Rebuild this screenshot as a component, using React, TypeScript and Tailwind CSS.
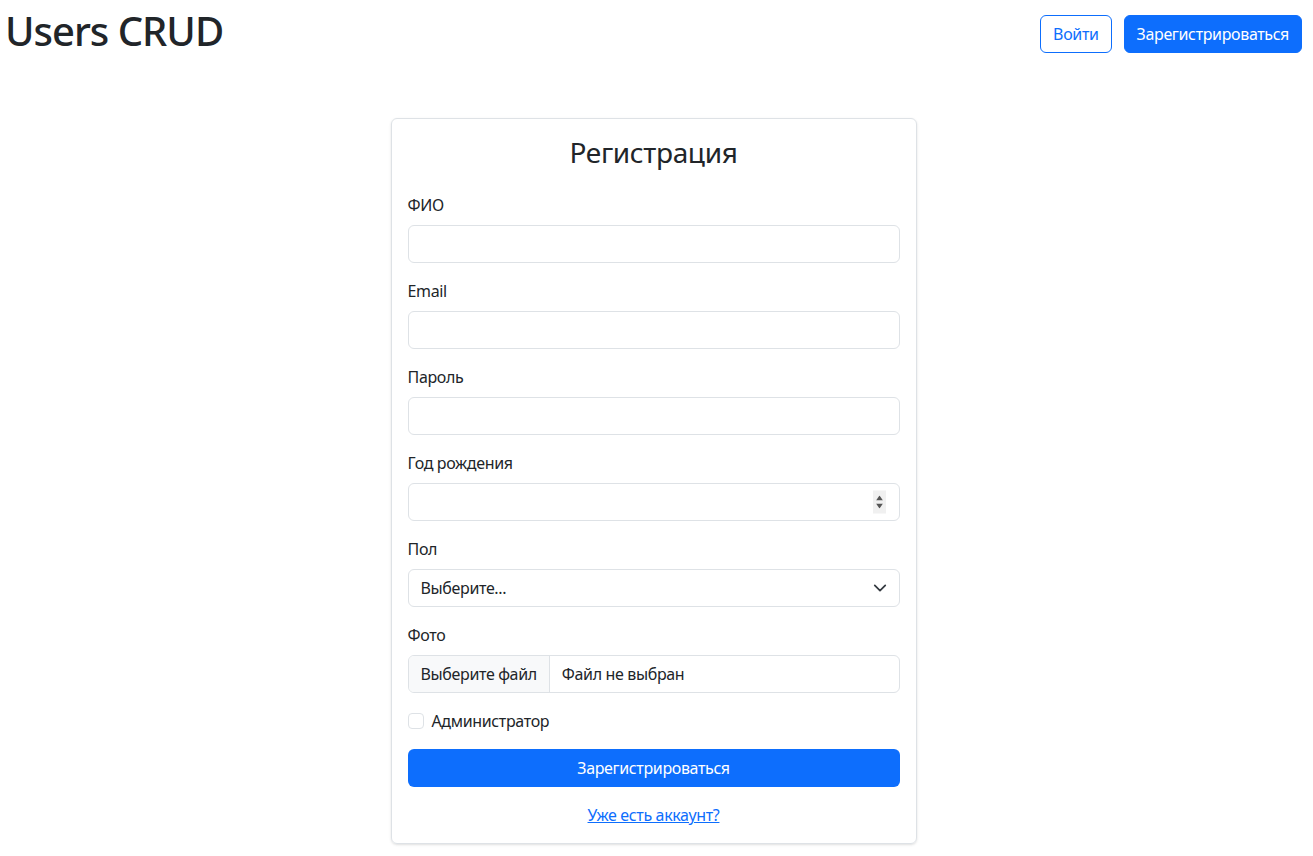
import React from "react";

const inputCls =
  "block w-full h-[38px] px-3 rounded-md border border-[#dee2e6] bg-white text-base text-[#212529] outline-none";

const Field = ({ label, children }: { label: string; children: React.ReactNode }) => (
  <div className="mb-4">
    <label className="block mb-2 text-base leading-6 text-[#212529]">{label}</label>
    {children}
  </div>
);

const App = () => {
  return (
    <div className="min-h-screen bg-white text-[#212529] tracking-[-0.35px] font-['Noto_Sans',sans-serif]">
      <header className="flex justify-between items-start pl-[5px] pr-[11px] pt-[7px]">
        <h1 className="text-[40px] leading-[48px] font-medium tracking-[-1px]">Users CRUD</h1>
        <div className="flex gap-3 mt-2">
          <button className="h-[38px] px-3 rounded-md border border-[#0d6efd] text-[#0d6efd] text-base">
            Войти
          </button>
          <button className="h-[38px] px-3 rounded-md border border-[#0d6efd] bg-[#0d6efd] text-white text-base">
            Зарегистрироваться
          </button>
        </div>
      </header>

      <div className="flex justify-center mt-[63px] pb-4 pr-[6px]">
        <div className="w-[526px] border border-[#dee2e6] rounded-md shadow-sm p-4">
          <h3 className="text-[28px] leading-[34px] text-center mb-6 font-normal">Регистрация</h3>

          <Field label="ФИО">
            <input type="text" className={inputCls} />
          </Field>
          <Field label="Email">
            <input type="email" className={inputCls} />
          </Field>
          <Field label="Пароль">
            <input type="password" className={inputCls} />
          </Field>
          <Field label="Год рождения">
            <div className="relative">
              <input type="text" inputMode="numeric" className={inputCls + " pr-9"} />
              <span className="absolute right-[14px] top-1/2 -translate-y-1/2 w-[13px] h-[23px] bg-[#f0f0f0] flex flex-col items-center justify-center gap-[3px] pointer-events-none">
                <svg width="7" height="5" viewBox="0 0 7 5">
                  <path d="M3.5 0 7 5H0z" fill="#555" />
                </svg>
                <svg width="7" height="5" viewBox="0 0 7 5">
                  <path d="M0 0h7L3.5 5z" fill="#555" />
                </svg>
              </span>
            </div>
          </Field>
          <Field label="Пол">
            <div className="relative">
              <select className={inputCls + " appearance-none pr-9"}>
                <option>Выберите...</option>
                <option>Мужской</option>
                <option>Женский</option>
              </select>
              <svg
                className="absolute right-[13px] top-1/2 -translate-y-1/2 pointer-events-none"
                width="14"
                height="14"
                viewBox="0 0 16 16"
                fill="none"
                stroke="#343a40"
                strokeWidth="2"
                strokeLinecap="round"
                strokeLinejoin="round"
              >
                <path d="m2 5 6 6 6-6" />
              </svg>
            </div>
          </Field>
          <Field label="Фото">
            <div className="flex h-[38px] rounded-md border border-[#dee2e6] overflow-hidden text-base">
              <span className="flex items-center px-3 bg-[#f8f9fa] border-r border-[#dee2e6]">
                Выберите файл
              </span>
              <span className="flex items-center px-3">Файл не выбран</span>
            </div>
          </Field>

          <div className="flex items-center h-6 mb-4">
            <span className="w-4 h-4 rounded-[4px] border border-[#dee2e6] bg-white" />
            <span className="ml-2 text-base">Администратор</span>
          </div>

          <button className="w-full h-[38px] rounded-md bg-[#0d6efd] text-white text-base">
            Зарегистрироваться
          </button>

          <div className="text-center mt-4 leading-6">
            <a href="#" className="text-[#0d6efd] underline text-base">
              Уже есть аккаунт?
            </a>
          </div>
        </div>
      </div>
    </div>
  );
};

export default App;
